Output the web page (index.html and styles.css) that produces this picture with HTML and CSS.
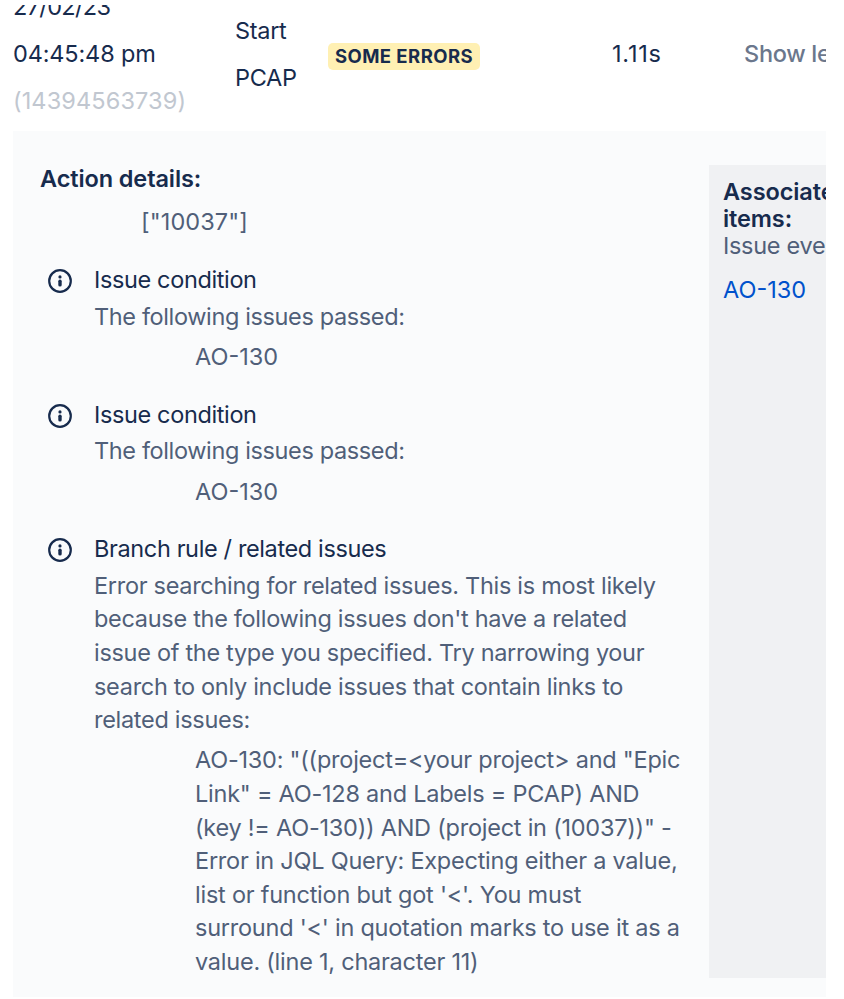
FILE: index.html
```html
<!DOCTYPE html>
<html lang="en">
<head>
    <meta charset="UTF-8">
    <meta content="width=device-width, initial-scale=1.0" name="viewport">
    <title>Audit log</title>
    <link rel="stylesheet" href="styles.css">
</head>
<body>

<div class="audit-log">
    <div class="log-row">
        <div class="log-date"><span class="log-day">27/02/23</span><br>04:45:48 pm<br><span class="log-id">(14394563739)</span></div>
        <div class="log-rule">Start<br>PCAP</div>
        <div class="log-status"><span class="lozenge">SOME ERRORS</span></div>
        <div class="log-duration">1.11s</div>
        <div class="log-toggle">Show less</div>
    </div>

    <div class="details">
        <div class="actions">
            <div class="heading">Action details:</div>
            <div class="action-value">["10037"]</div>

            <div class="action">
                <svg class="info-icon" viewBox="0 0 24 24">
                    <circle cx="12" cy="12" r="10.8" fill="none" stroke="currentColor" stroke-width="2.2"/>
                    <circle cx="12" cy="7.9" r="1.6" fill="currentColor"/>
                    <path d="M12 12.3v3.6" stroke="currentColor" stroke-width="3.4" stroke-linecap="round"/>
                </svg>
                <div class="action-body">
                    <div class="action-title">Issue condition</div>
                    <div class="action-text passed">The following issues passed:</div>
                    <div class="action-result key">AO-130</div>
                </div>
            </div>

            <div class="action">
                <svg class="info-icon" viewBox="0 0 24 24">
                    <circle cx="12" cy="12" r="10.8" fill="none" stroke="currentColor" stroke-width="2.2"/>
                    <circle cx="12" cy="7.9" r="1.6" fill="currentColor"/>
                    <path d="M12 12.3v3.6" stroke="currentColor" stroke-width="3.4" stroke-linecap="round"/>
                </svg>
                <div class="action-body">
                    <div class="action-title">Issue condition</div>
                    <div class="action-text passed">The following issues passed:</div>
                    <div class="action-result key">AO-130</div>
                </div>
            </div>

            <div class="action">
                <svg class="info-icon" viewBox="0 0 24 24">
                    <circle cx="12" cy="12" r="10.8" fill="none" stroke="currentColor" stroke-width="2.2"/>
                    <circle cx="12" cy="7.9" r="1.6" fill="currentColor"/>
                    <path d="M12 12.3v3.6" stroke="currentColor" stroke-width="3.4" stroke-linecap="round"/>
                </svg>
                <div class="action-body">
                    <div class="action-title">Branch rule / related issues</div>
                    <div class="action-text">Error searching for related issues. This is most likely<br>because the following issues don't have a related<br>issue of the type you specified. Try narrowing your<br>search to only include issues that contain links to<br>related issues:</div>
                    <div class="action-result">AO-130: "((project=&lt;your project&gt; and "Epic<br>Link" = AO-128 and Labels = PCAP) AND<br>(key != AO-130)) AND (project in (10037))" -<br>Error in JQL Query: Expecting either a value,<br>list or function but got '&lt;'. You must<br>surround '&lt;' in quotation marks to use it as a<br>value. (line 1, character 11)</div>
                </div>
            </div>
        </div>

        <div class="associated">
            <div class="heading">Associated<br>items:</div>
            <div class="associated-type">Issue event</div>
            <a class="issue-link">AO-130</a>
        </div>
    </div>
</div>

</body>
</html>
```
FILE: styles.css
```css
body {
    margin: 0;
    padding: 5px 18px 2px 13px;
    background: #fff;
    color: #172b4d;
    font-family: Inter, sans-serif;
    font-size: 23.5px;
    letter-spacing: -0.3px;
    white-space: nowrap;
}

.audit-log {
    height: 992px;
    overflow: hidden;
}

.log-row {
    display: grid;
    grid-template-columns: 222px 93px 284px 132px 1fr;
    align-items: center;
    height: 141px;
    margin-top: -22px;
    padding-bottom: 7px;
    line-height: 47px;
}

.log-date {
    letter-spacing: -0.15px;
}

.log-day {
    letter-spacing: -0.65px;
}

.log-id {
    color: #c1c7d0;
    letter-spacing: 0.12px;
}

.log-duration {
    letter-spacing: 0.8px;
}

.log-toggle {
    color: #6b778c;
    font-weight: 500;
}

.lozenge {
    display: block;
    width: 152px;
    height: 27px;
    margin-top: 5px;
    border-radius: 5px;
    background: #fff0b3;
    font-size: 18.5px;
    font-weight: 700;
    line-height: 26px;
    letter-spacing: 0.45px;
    text-align: center;
}

.details {
    display: flex;
    align-items: flex-start;
    height: 833px;
    padding: 34px 0 0 27px;
    background: #fafbfc;
}

.actions {
    flex: 0 0 669px;
    color: #505f79;
    line-height: 33.6px;
}

.heading {
    color: #172b4d;
    font-weight: 600;
    line-height: 27px;
    letter-spacing: -0.1px;
}

.action-value {
    margin: 13.4px 0 27px 101px;
    letter-spacing: 0.1px;
}

.action {
    display: flex;
    margin-bottom: 27px;
}

.info-icon {
    flex: none;
    width: 24px;
    height: 24px;
    margin: 3px 22px 0 8px;
    color: #172b4d;
}

.action-title {
    margin-bottom: 6.7px;
    color: #172b4d;
    line-height: 27px;
    letter-spacing: -0.37px;
}

.passed {
    letter-spacing: -0.37px;
}

.action-result {
    margin: 6.7px 0 0 101px;
    letter-spacing: -0.24px;
}

.key {
    letter-spacing: 0;
}

.associated {
    flex: 1;
    height: 787px;
    padding: 13px 0 13px 14px;
    background: #f0f1f3;
    color: #505f79;
    line-height: 27px;
    overflow: hidden;
}

.issue-link {
    display: block;
    margin-top: 14px;
    color: #0052cc;
    line-height: 33.6px;
    letter-spacing: 0;
}
```
